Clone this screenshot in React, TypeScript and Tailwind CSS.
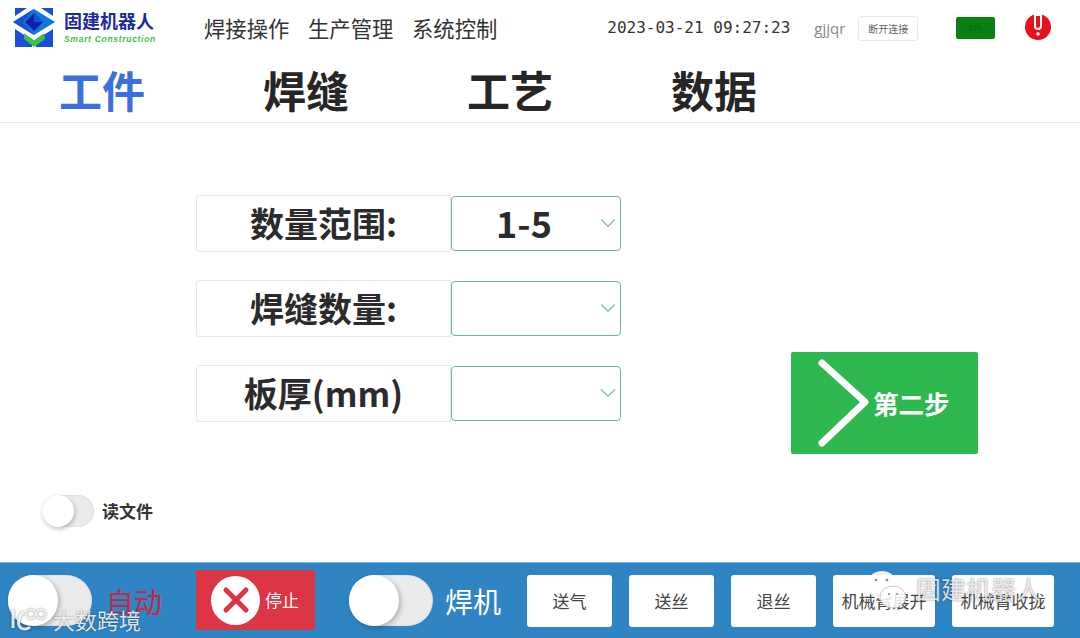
import { ChevronDown, X } from 'lucide-react';

const cjk = "font-['Noto_Sans_CJK_SC','Noto_Sans',sans-serif]";

const navItems = ['焊接操作', '生产管理', '系统控制'];
const tabs = ['工件', '焊缝', '工艺', '数据'];
const fields = [
  { label: '数量范围:', value: '1-5' },
  { label: '焊缝数量:', value: '' },
  { label: '板厚(mm)', value: '' },
];
const actions = [
  { label: '送气', width: 'w-[85px]' },
  { label: '送丝', width: 'w-[85px]' },
  { label: '退丝', width: 'w-[85px]' },
  { label: '机械臂展开', width: 'w-[102px]' },
  { label: '机械臂收拢', width: 'w-[102px]' },
];

function Logo() {
  return (
    <div className="flex items-center w-[142px] h-[40px]">
      <svg width="42" height="40" viewBox="0 0 42 40" className="shrink-0">
        {/* corners */}
        <path d="M2 0h12L2 8z" fill="#1a50d8" />
        <path d="M28 0h12v8z" fill="#1a50d8" />
        <path d="M2 21l17 11v7H2z" fill="#1a50d8" />
        <path d="M40 21L23 32v7h17z" fill="#1a50d8" />
        {/* roof */}
        <path d="M0 14L21 1l21 13-21 13z" fill="#0f78e0" />
        <path d="M21 1L10 14l11 13L0 14z" fill="#1a50d8" />
        <path d="M21 5l-9 9 9 9 9-9z" fill="#1420a8" />
        <path d="M21 5l9 9h-9z" fill="#1058d0" />
        {/* green V */}
        <path d="M11 25l10 7 10-7 1 6-11 8-10-8z" fill="#3ec04a" />
        <path d="M6 21l15 10 15-10" fill="none" stroke="#fff" strokeWidth="1.5" />
      </svg>
      <div className="ml-[9px] -mt-[4px] flex flex-col">
        <span className={`${cjk} text-[18px] leading-[22px] font-bold text-[#1b2a9c] whitespace-nowrap`}>
          固建机器人
        </span>
        <span className="mt-[3px] font-['Liberation_Sans',sans-serif] text-[8.5px] leading-[10px] font-bold italic tracking-[0.7px] text-[#3fc04a] whitespace-nowrap">
          Smart Construction
        </span>
      </div>
    </div>
  );
}

function Toggle({ large }: { large?: boolean }) {
  return (
    <div
      className={
        large
          ? 'w-[84px] h-[51px] rounded-full bg-[#ebebeb] shadow-[inset_0_0_2px_rgba(0,0,0,0.15)] shrink-0'
          : 'w-[52px] h-[32px] rounded-full bg-[#ebebeb] shadow-[inset_0_0_2px_rgba(0,0,0,0.15)] shrink-0'
      }
    >
      <div
        className={
          large
            ? 'w-[50px] h-[51px] rounded-full bg-white shadow-[2px_2px_5px_rgba(0,0,0,0.25)]'
            : 'w-[32px] h-[32px] rounded-full bg-white shadow-[1px_2px_4px_rgba(0,0,0,0.25)]'
        }
      />
    </div>
  );
}

export default function App() {
  return (
    <div className={`${cjk} relative w-[1080px] h-[638px] overflow-hidden bg-white flex flex-col`}>
      {/* Header */}
      <header className="h-[56px] flex items-center pl-[13px] shrink-0">
        <Logo />
        <nav className="ml-[49px] flex gap-[18.67px] text-[21.33px] text-[#333]">
          {navItems.map((item) => (
            <span key={item} className="whitespace-nowrap">
              {item}
            </span>
          ))}
        </nav>
        <span className="ml-[110px] font-['DejaVu_Sans_Mono',monospace] text-[16px] text-[#333] whitespace-nowrap">
          2023-03-21 09:27:23
        </span>
        <span className="ml-[24px] font-['Open_Sans',sans-serif] text-[15px] text-[#888]">gjjqr</span>
        <button className="ml-[13px] w-[60px] h-[25px] rounded-[3px] border border-[#e8e8e8] text-[10px] text-[#666]">
          断开连接
        </button>
        <div className="ml-[38px] w-[39px] h-[22px] rounded-[2px] bg-[#0a8012] flex items-center justify-center text-[7px] text-[#0c5c10]">
          87%
        </div>
        <svg width="26" height="26" viewBox="0 0 26 26" className="ml-[30px] -mt-[2px]">
          <circle cx="13" cy="13" r="13" fill="#e8101c" />
          <path d="M10 1h6v11a3 3 0 0 1-6 0z" fill="#e8101c" stroke="#fff" strokeWidth="2" />
          <circle cx="13" cy="20" r="1.8" fill="#fff" />
        </svg>
      </header>

      {/* Tabs */}
      <div className="h-[67px] shrink-0 flex pl-[59px] gap-[118px] border-b border-[#e6e6e6]">
        {tabs.map((tab, i) => (
          <span
            key={tab}
            className={
              i === 0
                ? 'w-[86px] text-[43px] leading-[66px] font-bold text-[#3a6fdc] whitespace-nowrap'
                : 'w-[86px] text-[43px] leading-[66px] font-bold text-[#262626] whitespace-nowrap'
            }
          >
            {tab}
          </span>
        ))}
      </div>

      {/* Form */}
      <main className="flex-1 flex flex-col">
        <div className="flex pl-[196px] pt-[72px]">
          <div className="flex flex-col gap-[28px] w-[425px]">
            {fields.map((field) => (
              <div key={field.label} className="flex h-[57px]">
                <div className="w-[255px] pb-[2px] rounded-l-[3px] border border-[#e8e8e8] flex items-center justify-center text-[34px] font-bold text-[#2b2b2b] whitespace-nowrap">
                  {field.label}
                </div>
                <div className="relative w-[170px] h-[55px] mt-px pb-[4px] rounded-[4px] border border-[#6cb98a] flex items-center justify-center text-[36px] font-bold text-[#2b2b2b]">
                  <span className="mr-[24px]">{field.value}</span>
                  <ChevronDown className="absolute right-[-1px] top-[13px] w-[26px] h-[26px] text-[#7fc4a0]" strokeWidth={1.2} />
                </div>
              </div>
            ))}
          </div>
          <button className="ml-[170px] mt-[157px] w-[187px] h-[102px] rounded-[2px] bg-[#2eb84f] flex items-center text-white">
            <svg width="60" height="96" viewBox="0 0 60 96" className="ml-[24px] shrink-0">
              <path d="M7 8l43 39-43 41" fill="none" stroke="#fff" strokeWidth="7" strokeLinecap="round" strokeLinejoin="round" />
            </svg>
            <span className="-ml-[2px] text-[25.5px] font-bold whitespace-nowrap">第二步</span>
          </button>
        </div>
        <div className="flex items-center mt-[41px] pl-[42px]">
          <Toggle />
          <span className="ml-[8px] text-[17px] font-bold text-[#333]">读文件</span>
        </div>
      </main>

      {/* Bottom bar */}
      <footer className="h-[76px] shrink-0 bg-[#2f84c4] border-t border-[#7db8e0] flex items-center pl-[8px]">
        <Toggle large />
        <span className="ml-[14px] w-[56px] text-[28px] text-[#c8283c] whitespace-nowrap">自动</span>
        <button className="ml-[34px] -mt-[1px] w-[119px] h-[60px] rounded-[2px] bg-[#dc3545] flex items-center pl-[15px] text-white">
          <span className="w-[49px] h-[49px] rounded-full bg-white flex items-center justify-center">
            <X className="w-[40px] h-[40px] text-[#dc3545]" strokeWidth={3} />
          </span>
          <span className="ml-[5px] text-[17px] whitespace-nowrap">停止</span>
        </button>
        <div className="ml-[34px]">
          <Toggle large />
        </div>
        <span className="ml-[12px] w-[57px] text-[28px] text-white whitespace-nowrap">焊机</span>
        <div className="ml-[25px] flex gap-[17px]">
          {actions.map((action) => (
            <button
              key={action.label}
              className={`${action.width} h-[52px] rounded-[3px] bg-white text-[17px] text-[#444] whitespace-nowrap`}
            >
              {action.label}
            </button>
          ))}
        </div>
      </footer>

      {/* Watermarks */}
      <div className="absolute left-[10px] top-[603px] flex items-center text-white/85 [text-shadow:0_0_2px_rgba(0,0,0,0.5)]">
        <svg width="40" height="26" viewBox="0 0 40 26" fill="none" stroke="currentColor" className="drop-shadow-[0_0_1px_rgba(0,0,0,0.6)]">
          <path d="M3 3v18M13 5C8 10 7 18 11 21c3 2 7 1 9-1" strokeWidth="3" />
          <circle cx="21" cy="7" r="4.5" strokeWidth="1.5" />
          <circle cx="31" cy="7" r="4.5" strokeWidth="1.5" />
        </svg>
        <span className="ml-[3px] text-[22px] whitespace-nowrap">大数跨境</span>
      </div>
      <div className="absolute left-[866px] top-[570px] flex items-center">
        <svg width="42" height="40" viewBox="0 0 42 40">
          <ellipse cx="16" cy="15" rx="15" ry="14" fill="#ffffff" fillOpacity="0.9" />
          <ellipse cx="27" cy="27" rx="13" ry="11" fill="#ffffff" fillOpacity="0.85" stroke="#99aaaa" strokeWidth="0.6" />
          <circle cx="10" cy="10" r="1.3" fill="#888899" />
          <circle cx="21" cy="10" r="1.3" fill="#888899" />
          <circle cx="23" cy="24" r="1.1" fill="#888899" />
          <circle cx="31" cy="24" r="1.1" fill="#888899" />
        </svg>
        <span className="ml-[8px] -mt-[2px] text-[25px] text-white/80 [text-shadow:0_0_2px_rgba(0,0,0,0.55)] whitespace-nowrap">
          固建机器人
        </span>
      </div>
    </div>
  );
}
